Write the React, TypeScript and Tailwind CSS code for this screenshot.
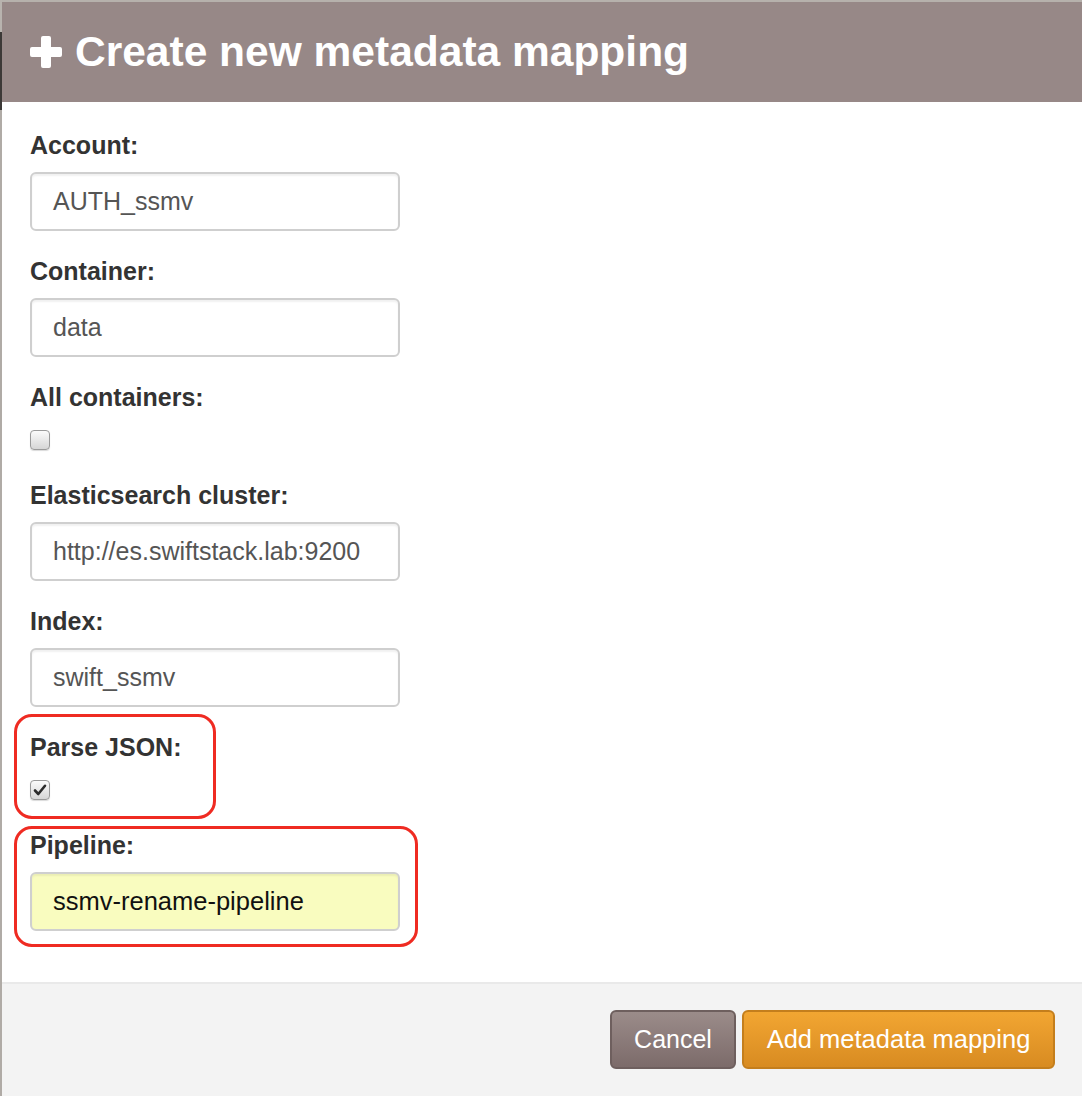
import React from "react";

const font = { fontFamily: '"Liberation Sans", Arial, Helvetica, sans-serif' };

function PlusIcon() {
    return (
        <svg width="34" height="34" viewBox="0 0 34 34" className="shrink-0">
            <path
                d="M12 3 a2 2 0 0 1 2 -2 h6 a2 2 0 0 1 2 2 v9 h9 a2 2 0 0 1 2 2 v6 a2 2 0 0 1 -2 2 h-9 v9 a2 2 0 0 1 -2 2 h-6 a2 2 0 0 1 -2 -2 v-9 h-9 a2 2 0 0 1 -2 -2 v-6 a2 2 0 0 1 2 -2 h9 z"
                fill="#ffffff"
            />
        </svg>
    );
}

function Label({ children }: { children: React.ReactNode }) {
    return <div className="h-[30px] leading-[30px] text-[25px] font-bold text-[#333333] mb-[12px]">{children}</div>;
}

function TextField({ value, filled }: { value: string; filled?: boolean }) {
    return (
        <div
            className={
                filled
                    ? "w-[370px] h-[59px] rounded-[6px] border-2 border-[#cfcfcf] bg-[#f9fcbf] pl-[21px] flex items-center text-[25.5px] text-[#111111] shadow-[inset_0_2px_2px_rgba(0,0,0,0.06)]"
                    : "w-[370px] h-[59px] rounded-[6px] border-2 border-[#cfcfcf] bg-white pl-[21px] flex items-center text-[25px] text-[#555555] shadow-[inset_0_2px_2px_rgba(0,0,0,0.06)]"
            }
        >
            {value}
        </div>
    );
}

function Checkbox({ checked }: { checked?: boolean }) {
    return (
        <div className="w-[20px] h-[20px] rounded-[4px] border border-[#9a9a9a] bg-gradient-to-b from-[#fbfbfb] to-[#d6d6d6] flex items-center justify-center shadow-[0_1px_1px_rgba(0,0,0,0.15)]">
            {checked && (
                <svg width="14" height="14" viewBox="0 0 14 14">
                    <path d="M2 7.5 L5.3 11 L12 2.8" fill="none" stroke="#2b2b2b" strokeWidth="2.6" strokeLinecap="round" strokeLinejoin="round" />
                </svg>
            )}
        </div>
    );
}

function Field({ label, value, filled }: { label: string; value: string; filled?: boolean }) {
    return (
        <div className="mb-[25px]">
            <Label>{label}</Label>
            <TextField value={value} filled={filled} />
        </div>
    );
}

function CheckField({ label, checked }: { label: string; checked?: boolean }) {
    return (
        <div className="mb-[30px]">
            <div className="h-[30px] leading-[30px] text-[25px] font-bold text-[#333333] mb-[18px]">{label}</div>
            <Checkbox checked={checked} />
        </div>
    );
}

export default function App() {
    return (
        <div className="w-[1082px] h-[1096px] bg-[#b6b1ac] flex overflow-hidden" style={font}>
            {/* page behind the dialog */}
            <div className="w-[2px] flex flex-col shrink-0">
                <div className="h-[32px] bg-[#b8b3ae]" />
                <div className="h-[78px] bg-[#3c3937]" />
                <div className="flex-1 bg-[#b0aba6]" />
            </div>

            <div className="flex-1 mt-[2px] bg-white flex flex-col relative">
                <div className="h-[100px] bg-[#978887] flex items-center pl-[27px] gap-[12px]">
                    <PlusIcon />
                    <h1 className="text-[42.5px] font-bold text-white leading-none">Create new metadata mapping</h1>
                </div>

                <div className="flex-1 pl-[28px] pt-[28px]">
                    <Field label="Account:" value="AUTH_ssmv" />
                    <Field label="Container:" value="data" />
                    <CheckField label="All containers:" />
                    <Field label="Elasticsearch cluster:" value="http://es.swiftstack.lab:9200" />
                    <Field label="Index:" value="swift_ssmv" />
                    <CheckField label="Parse JSON:" checked />
                    <Field label="Pipeline:" value="ssmv-rename-pipeline" filled />
                </div>

                <div className="h-[114px] shrink-0 bg-[#f3f3f3] border-t-2 border-[#e9e9e9] flex justify-end items-start pt-[26px] pr-[27px] gap-[6px]">
                    <button className="w-[126px] h-[59px] rounded-[6px] border-2 border-[#6e5f5e] bg-gradient-to-b from-[#9b8c8a] to-[#7c6b6a] text-white text-[25px]">
                        Cancel
                    </button>
                    <button className="w-[313px] h-[59px] rounded-[6px] border-2 border-[#c47e1c] bg-gradient-to-b from-[#f2a632] to-[#d88b21] text-white text-[25.5px]">
                        Add metadata mapping
                    </button>
                </div>

                {/* red annotation outlines */}
                <div className="absolute left-[12px] top-[712px] w-[202px] h-[105px] rounded-[18px] border-[3px] border-[#ef2b22]" />
                <div className="absolute left-[12px] top-[824px] w-[404px] h-[121px] rounded-[18px] border-[3px] border-[#ef2b22]" />
            </div>
        </div>
    );
}
